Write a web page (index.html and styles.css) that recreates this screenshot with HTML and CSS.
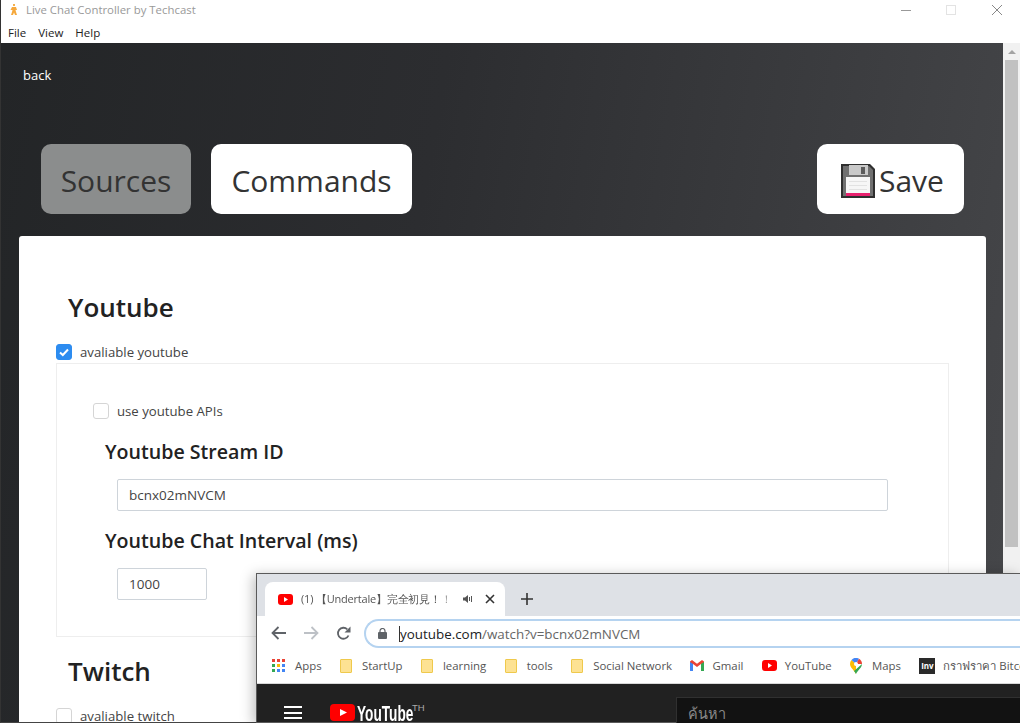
FILE: index.html
```html
<!DOCTYPE html>
<html lang="en">

<head>
    <meta charset="UTF-8">
    <meta name="viewport" content="width=device-width, initial-scale=1.0">
    <title>Live Chat Controller by Techcast</title>
    <link rel="stylesheet" href="styles.css">
</head>

<body>
    <div class="app">
        <div class="titlebar">
            <svg class="app-icon" width="8" height="11" viewBox="0 0 8 11">
                <rect x="3" y="0" width="2" height="2" fill="#f5b04c" />
                <path d="M2 3h4l1 3H5.500l.5 2 1 3H5L4 8.500 3 11H1l1-3 .5-2H.5z" fill="#f5a83c" />
            </svg>
            <span class="title-text">Live Chat Controller by Techcast</span>
            <div class="win-controls">
                <svg width="10" height="10" viewBox="0 0 10 10"><path d="M0 5.500h10" stroke="#999" /></svg>
                <svg width="10" height="10" viewBox="0 0 10 10"><rect x=".5" y=".5" width="9" height="9" fill="none" stroke="#e3e3e3" /></svg>
                <svg class="win-close" width="10" height="10" viewBox="0 0 10 10"><path d="M0 0l10 10M10 0L0 10" stroke="#888" /></svg>
            </div>
        </div>
        <div class="menubar">
            <span>File</span>
            <span>View</span>
            <span>Help</span>
        </div>
        <div class="content">
            <div class="page">
                <a class="back">back</a>
                <div class="tabs">
                    <button class="tab-btn active">Sources</button>
                    <button class="tab-btn commands-btn">Commands</button>
                    <button class="tab-btn save-btn">
                        <svg class="save-icon" width="34" height="34" viewBox="0 0 34 34">
                            <path d="M0 0h29l5 5v29H0z" fill="#2f2f2f" />
                            <path d="M2 2h26l4 4v26H2z" fill="#707070" />
                            <rect x="8" y="1" width="19" height="10" fill="#c9c9c9" />
                            <rect x="20" y="3" width="4" height="7" fill="#5c5c5c" />
                            <rect x="5" y="13" width="24" height="19" fill="#f6f6f6" />
                            <path d="M8 17.500h18M8 21.500h18M8 25.500h18" stroke="#e2e2e2" />
                            <rect x="5" y="29" width="24" height="3" fill="#e8206e" />
                        </svg>
                        <span>Save</span>
                    </button>
                </div>
                <div class="card">
                    <h2 class="section-title">Youtube</h2>
                    <label class="check">
                        <span class="box checked">
                            <svg width="12" height="12" viewBox="0 0 12 12"><path d="M2 6.500l2.800 2.500L10 3.500" fill="none" stroke="#fff" stroke-width="2" /></svg>
                        </span>
                        avaliable youtube
                    </label>
                    <div class="group">
                        <label class="check">
                            <span class="box"></span>
                            use youtube APIs
                        </label>
                        <h3 class="field-title">Youtube Stream ID</h3>
                        <input class="text-input" type="text" value="bcnx02mNVCM">
                        <h3 class="field-title">Youtube Chat Interval (ms)</h3>
                        <input class="text-input number-input" type="text" value="1000">
                    </div>
                    <h2 class="section-title twitch-title">Twitch</h2>
                    <label class="check">
                        <span class="box"></span>
                        avaliable twitch
                    </label>
                </div>
            </div>
            <div class="scrollbar">
                <span class="scroll-arrow"></span>
                <div class="scroll-thumb"></div>
            </div>
        </div>
    </div>

    <div class="chrome">
        <div class="tabstrip">
            <div class="chrome-tab">
                <svg width="15" height="11" viewBox="0 0 15 11"><rect width="15" height="11" rx="3" fill="#f00" /><path d="M6 3l4 2.500L6 8z" fill="#fff" /></svg>
                <span class="chrome-tab-title">(1) 【Undertale】完全初見！！</span>
                <svg class="tab-sound" width="10" height="10" viewBox="0 0 10 10"><path d="M0 3.500h2L5 1v8L2 6.500H0z" fill="#555" /><path d="M6.500 3v4M8.500 2v6" stroke="#555" /></svg>
                <svg class="tab-close" width="10" height="10" viewBox="0 0 10 10"><path d="M1 1l8 8M9 1L1 9" stroke="#333" stroke-width="1.600" /></svg>
            </div>
            <svg class="new-tab" width="12" height="12" viewBox="0 0 12 12"><path d="M6 0v12M0 6h12" stroke="#333" stroke-width="1.600" /></svg>
        </div>
        <div class="toolbar">
            <svg width="16" height="14" viewBox="0 0 16 14"><path d="M15 7H2M7.500 1L1.500 7l6 6" fill="none" stroke="#5f6368" stroke-width="1.800" /></svg>
            <svg width="16" height="14" viewBox="0 0 16 14"><path d="M1 7h13M8.500 1l6 6-6 6" fill="none" stroke="#bdc1c6" stroke-width="1.800" /></svg>
            <svg class="reload" width="15" height="15" viewBox="0 0 15 15"><path d="M12.500 9.500A5.500 5.500 0 1 1 11.300 3.300" fill="none" stroke="#5f6368" stroke-width="1.800" /><path d="M14.500 0.500v6h-6z" fill="#5f6368" /></svg>
            <div class="omnibox">
                <svg width="9" height="11" viewBox="0 0 9 11"><rect y="4" width="9" height="7" rx="1" fill="#5f6368" /><path d="M2 4.500V3a2.500 2.500 0 0 1 5 0v1.500" fill="none" stroke="#5f6368" stroke-width="1.200" /></svg>
                <span class="url"><span class="caret"></span>youtube.com<span class="url-rest">/watch?v=bcnx02mNVCM</span></span>
            </div>
        </div>
        <div class="bookmarks">
            <span class="bookmark apps">
                <svg width="14" height="14" viewBox="0 0 14 14">
                    <path d="M0 0h3v3H0z" fill="#ea4335" /><path d="M5 0h3v3H5z" fill="#ea4335" /><path d="M10 0h3v3h-3z" fill="#ea4335" />
                    <path d="M0 5h3v3H0z" fill="#34a853" /><path d="M5 5h3v3H5z" fill="#fbbc04" /><path d="M10 5h3v3h-3z" fill="#4285f4" />
                    <path d="M0 10h3v3H0z" fill="#34a853" /><path d="M5 10h3v3H5z" fill="#4285f4" /><path d="M10 10h3v3h-3z" fill="#4285f4" />
                </svg>
                Apps
            </span>
            <span class="bookmark"><span class="folder"></span>StartUp</span>
            <span class="bookmark"><span class="folder"></span>learning</span>
            <span class="bookmark"><span class="folder"></span>tools</span>
            <span class="bookmark"><span class="folder"></span>Social Network</span>
            <span class="bookmark tight">
                <svg width="14" height="11" viewBox="0 0 14 11"><path d="M0 1.500V11h3V4l4 3 4-3v7h3V1.500L12 0 7 3.700 2 0z" fill="#ea4335" /><path d="M0 2v9h3V4z" fill="#4285f4" /><path d="M14 2v9h-3V4z" fill="#34a853" /></svg>
                Gmail
            </span>
            <span class="bookmark tight">
                <svg width="15" height="11" viewBox="0 0 15 11"><rect width="15" height="11" rx="3" fill="#f00" /><path d="M6 3l4 2.500L6 8z" fill="#fff" /></svg>
                YouTube
            </span>
            <span class="bookmark">
                <svg width="12" height="16" viewBox="0 0 12 16"><path d="M6 16C4 12 0 9.500 0 6a6 6 0 0 1 1.500-4L6 6z" fill="#fbbc04" /><path d="M1.500 2A6 6 0 0 1 9 .8L6 6z" fill="#4285f4" /><path d="M9 .8a6 6 0 0 1 3 5.200L6 6z" fill="#ea4335" /><path d="M12 6c0 3.500-4 6-6 10-.5-1-1.200-2-2-3l8-7z" fill="#34a853" /><circle cx="6" cy="6" r="2" fill="#fff" /></svg>
                Maps
            </span>
            <span class="bookmark tight"><span class="inv-icon">Inv</span>กราฟราคา Bitcoin</span>
        </div>
        <div class="yt-header">
            <div class="burger"><span></span><span></span><span></span></div>
            <svg class="yt-logo" width="25" height="17" viewBox="0 0 25 17"><rect width="25" height="17" rx="4" fill="#f00" /><path d="M10 5l7 3.500-7 3.500z" fill="#fff" /></svg>
            <span class="yt-word">YouTube</span>
            <span class="yt-th">TH</span>
            <div class="yt-search">ค้นหา</div>
        </div>
    </div>
</body>

</html>
```

FILE: styles.css
```css
* {
    box-sizing: border-box;
}

html, body {
    height: 100%;
}

body {
    margin: 0;
    overflow: hidden;
    background-color: #fff;
    font-family: "Open Sans", "Noto Sans", sans-serif;
    font-size: 12px;
}

.app {
    display: flex;
    flex-direction: column;
    height: 723px;
    width: 1020px;
    border-left: 1px solid #333;
    border-bottom: 1px solid #444;
}

/* window frame */
.titlebar {
    display: flex;
    align-items: center;
    height: 22px;
    flex-shrink: 0;
    padding-left: 9px;
    padding-bottom: 3px;
}

.title-text {
    margin-left: 8px;
    color: #999;
    font-size: 11.400px;
}

.win-controls {
    display: flex;
    gap: 35px;
    margin-left: auto;
    margin-right: 18px;
}

.win-close {
    margin-left: 1px;
}

.menubar {
    display: flex;
    gap: 12px;
    height: 21px;
    flex-shrink: 0;
    padding-left: 7px;
    padding-top: 3px;
    color: #222;
    font-size: 11.500px;
}

.content {
    display: flex;
    flex: 1;
    min-height: 0;
}

.page {
    flex: 1;
    overflow: hidden;
    padding-left: 18px;
    background: linear-gradient(100deg, #232527, #2c2d30 40%, #46474a);
}

.scrollbar {
    width: 17px;
    flex-shrink: 0;
    padding: 7px 2px 0 2px;
    background-color: #f1f1f1;
}

.scroll-arrow {
    display: block;
    width: 0;
    margin: 0 auto 6px;
    border-left: 4px solid transparent;
    border-right: 4px solid transparent;
    border-bottom: 4px solid #a3a3a3;
}

.scroll-thumb {
    height: 487px;
    background-color: #c1c1c1;
}

.back {
    display: block;
    padding: 22px 0 0 4px;
    color: #fff;
    font-size: 13px;
    line-height: 20px;
}

.tabs {
    display: flex;
    gap: 20px;
    margin-top: 59px;
    padding-left: 22px;
    padding-right: 39px;
}

.tab-btn {
    height: 70px;
    padding: 2px 0 0;
    border: none;
    border-radius: 10px;
    background-color: #fff;
    color: #333;
    font-family: inherit;
    font-size: 30px;
}

.tab-btn.active {
    width: 150px;
    background-color: #8b8d8d;
}

.commands-btn {
    width: 201px;
}

.save-btn {
    display: flex;
    align-items: center;
    gap: 4px;
    width: 147px;
    margin-left: auto;
    padding: 2px 0 0 24px;
}

.save-icon {
    margin-top: 2px;
}

.card {
    height: 600px;
    margin-top: 22px;
    margin-right: 17px;
    padding: 52px 37px 0;
    border-radius: 3px 3px 0 0;
    background-color: #fff;
}

.section-title {
    margin: 0 0 18px 12px;
    color: #222;
    font-size: 26px;
    font-weight: 600;
    line-height: 38px;
}

.twitch-title {
    margin-top: 15px;
}

.check {
    display: flex;
    align-items: center;
    gap: 8px;
    height: 16px;
    color: #444;
    font-size: 13.200px;
}

.box {
    display: flex;
    align-items: center;
    justify-content: center;
    width: 16px;
    height: 16px;
    border: 1px solid #d5d5d5;
    border-radius: 3px;
    background-color: #fff;
}

.box.checked {
    border-color: #2d8cf0;
    background-color: #2d8cf0;
}

.group {
    height: 274px;
    margin-top: 3px;
    padding: 39px 36px 0;
    border: 1px solid #eee;
}

.group .check {
    margin-bottom: 19px;
}

.field-title {
    margin: 0 0 13px 12px;
    color: #222;
    font-size: 19.600px;
    font-weight: 600;
    line-height: 28px;
}

.text-input {
    display: block;
    width: 771px;
    height: 32px;
    margin: 0 0 16px 24px;
    padding: 0 11px;
    border: 1px solid #ced4da;
    border-radius: 2px;
    color: #444;
    font-family: inherit;
    font-size: 13.500px;
}

.number-input {
    width: 90px;
}

/* chrome window over the app */
.chrome {
    position: absolute;
    left: 256px;
    top: 573px;
    width: 764px;
    height: 150px;
    display: flex;
    flex-direction: column;
    border: 1px solid #5a5a5a;
    border-right: none;
    background-color: #fff;
    box-shadow: -3px 2px 12px rgba(0, 0, 0, 0.25);
}

.tabstrip {
    display: flex;
    align-items: flex-end;
    height: 42px;
    flex-shrink: 0;
    padding-left: 8px;
    background-color: #dee1e6;
}

.chrome-tab {
    display: flex;
    align-items: center;
    width: 240px;
    height: 34px;
    padding-left: 13px;
    border-radius: 8px 8px 0 0;
    background-color: #fff;
}

.chrome-tab svg {
    flex-shrink: 0;
}

.chrome-tab-title {
    width: 156px;
    margin-left: 8px;
    overflow: hidden;
    white-space: nowrap;
    color: #555;
    font-size: 11px;
    letter-spacing: -0.2px;
    -webkit-mask-image: linear-gradient(90deg, #000 88%, transparent);
    mask-image: linear-gradient(90deg, #000 88%, transparent);
}

.tab-sound {
    margin-left: 6px;
}

.tab-close {
    margin-left: 12px;
}

.new-tab {
    margin: 0 0 11px 16px;
}

.toolbar {
    display: flex;
    align-items: center;
    gap: 16px;
    height: 34px;
    flex-shrink: 0;
    padding-left: 14px;
}

.toolbar svg {
    flex-shrink: 0;
}

.reload {
    margin-left: 1px;
}

.omnibox {
    display: flex;
    align-items: center;
    flex: 1;
    gap: 12px;
    height: 29px;
    margin-left: -3px;
    padding-left: 12px;
    border: 2px solid #b5d3f0;
    border-right: none;
    border-radius: 15px 0 0 15px;
}

.url {
    display: flex;
    align-items: center;
    color: #202124;
    font-size: 13.400px;
    padding-top: 1px;
}

.url-rest {
    color: #666;
}

.caret {
    width: 1px;
    height: 16px;
    background-color: #333;
}

.bookmarks {
    display: flex;
    align-items: center;
    gap: 18.400px;
    height: 34px;
    flex-shrink: 0;
    padding-left: 15px;
    padding-bottom: 2px;
    overflow: hidden;
    border-bottom: 1px solid #d8d8d8;
    white-space: nowrap;
    color: #555;
    font-size: 11.400px;
}

.bookmark {
    display: flex;
    align-items: center;
    gap: 10px;
}

.bookmark.apps {
    gap: 9px;
}

.bookmark.tight {
    gap: 8px;
}

.bookmark svg {
    flex-shrink: 0;
}

.folder {
    width: 12px;
    height: 14px;
    border: 1px solid #efc94c;
    border-radius: 1px;
    background-color: #fde293;
}

.inv-icon {
    width: 16px;
    height: 16px;
    background-color: #2a2a2a;
    color: #fff;
    font-size: 8px;
    font-weight: 700;
    line-height: 16px;
    text-align: center;
}

.yt-header {
    display: flex;
    align-items: flex-start;
    flex: 1;
    padding: 22px 0 0 27px;
    overflow: hidden;
    background-color: #212121;
}

.burger {
    display: flex;
    flex-direction: column;
    gap: 3.500px;
    width: 18px;
    margin-right: 28px;
}

.burger span {
    height: 2px;
    background-color: #fff;
}

.yt-logo {
    flex-shrink: 0;
    margin-top: -2px;
}

.yt-word {
    width: 55px;
    margin: -5px 0 0 2px;
    color: #fff;
    font-family: "Liberation Sans", sans-serif;
    font-size: 22px;
    font-weight: 700;
    white-space: nowrap;
    transform: scaleX(0.62);
    transform-origin: left;
}

.yt-th {
    margin-top: -4px;
    color: #aaa;
    font-family: "Liberation Sans", sans-serif;
    font-size: 9.500px;
}

.yt-search {
    position: absolute;
    left: 419px;
    top: 123px;
    width: 345px;
    height: 30px;
    padding: 4px 0 0 11px;
    border: 1px solid #303030;
    background-color: #121212;
    color: #888;
    font-size: 14.500px;
}
```
